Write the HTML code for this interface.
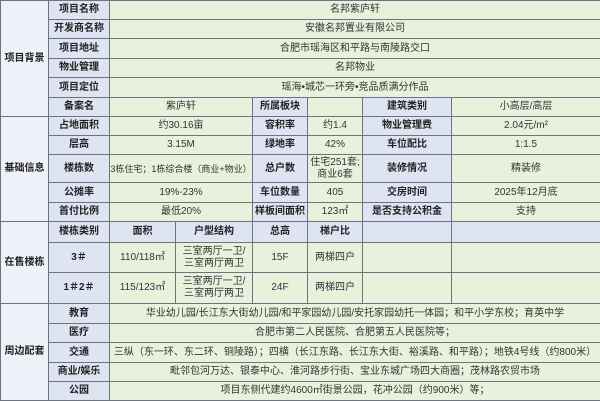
<!DOCTYPE html>
<html><head><meta charset="utf-8"><style>
body{margin:0;width:600px;height:400px;overflow:hidden;background:#fff}
table{border-collapse:collapse;table-layout:fixed;width:600px;font-family:"Liberation Sans","Noto Sans CJK SC",sans-serif;font-size:10px;color:#222}
td{border:1px solid #6a7482;text-align:center;padding:0;line-height:12px;overflow:hidden;white-space:nowrap}
.s{background:#eef1f8;font-weight:bold}
.b{background:#dfe4f3;font-weight:bold}
.g{background:#e8f1dc;color:#333}
</style></head><body>
<table>
<colgroup><col style="width:48px"><col style="width:61px"><col style="width:66px"><col style="width:77px"><col style="width:55px"><col style="width:55px"><col style="width:89px"><col style="width:149px"></colgroup>
<tr style="height:19px"><td class="s" rowspan="6">项目背景</td><td class="b">项目名称</td><td class="g" colspan="6">名邦紫庐轩</td></tr>
<tr style="height:19px"><td class="b">开发商名称</td><td class="g" colspan="6">安徽名邦置业有限公司</td></tr>
<tr style="height:20px"><td class="b">项目地址</td><td class="g" colspan="6">合肥市瑶海区和平路与南陵路交口</td></tr>
<tr style="height:19px"><td class="b">物业管理</td><td class="g" colspan="6">名邦物业</td></tr>
<tr style="height:20px"><td class="b">项目定位</td><td class="g" colspan="6">瑶海•城芯一环旁•竞品质满分作品</td></tr>
<tr style="height:19px"><td class="b">备案名</td><td class="g" colspan="2">紫庐轩</td><td class="b">所属板块</td><td class="g"></td><td class="b">建筑类别</td><td class="g">小高层/高层</td></tr>
<tr style="height:19px"><td class="s" rowspan="5">基础信息</td><td class="b">占地面积</td><td class="g" colspan="2">约30.16亩</td><td class="b">容积率</td><td class="g">约1.4</td><td class="b">物业管理费</td><td class="g">2.04元/m²</td></tr>
<tr style="height:19px"><td class="b">层高</td><td class="g" colspan="2">3.15M</td><td class="b">绿地率</td><td class="g">42%</td><td class="b">车位配比</td><td class="g">1:1.5</td></tr>
<tr style="height:28px"><td class="b">楼栋数</td><td class="g" colspan="2" style="font-size:9px">3栋住宅；1栋综合楼（商业+物业）</td><td class="b">总户数</td><td class="g">住宅251套;<br>商业6套</td><td class="b">装修情况</td><td class="g">精装修</td></tr>
<tr style="height:20px"><td class="b">公摊率</td><td class="g" colspan="2">19%-23%</td><td class="b">车位数量</td><td class="g">405</td><td class="b">交房时间</td><td class="g">2025年12月底</td></tr>
<tr style="height:19px"><td class="b">首付比例</td><td class="g" colspan="2">最低20%</td><td class="b">样板间面积</td><td class="g">123㎡</td><td class="b">是否支持公积金</td><td class="g">支持</td></tr>
<tr style="height:21px"><td class="s" rowspan="3">在售楼栋</td><td class="b">楼栋类别</td><td class="b">面积</td><td class="b">户型结构</td><td class="b">总高</td><td class="b">梯户比</td><td class="b"></td><td class="b"></td></tr>
<tr style="height:30px"><td class="b">3＃</td><td class="g">110/118㎡</td><td class="g">三室两厅一卫/<br>三室两厅两卫</td><td class="g">15F</td><td class="g">两梯四户</td><td class="g"></td><td class="g"></td></tr>
<tr style="height:31px"><td class="b">1＃2＃</td><td class="g">115/123㎡</td><td class="g">三室两厅一卫/<br>三室两厅两卫</td><td class="g">24F</td><td class="g">两梯四户</td><td class="g"></td><td class="g"></td></tr>
<tr style="height:20px"><td class="s" rowspan="5">周边配套</td><td class="b">教育</td><td class="g" colspan="6">华业幼儿园/长江东大街幼儿园/和平家园幼儿园/安托家园幼托一体园；和平小学东校；育英中学</td></tr>
<tr style="height:19px"><td class="b">医疗</td><td class="g" colspan="6">合肥市第二人民医院、合肥第五人民医院等；</td></tr>
<tr style="height:20px"><td class="b">交通</td><td class="g" colspan="6">三纵（东一环、东二环、铜陵路）；四横（长江东路、长江东大街、裕溪路、和平路）；地铁4号线（约800米）</td></tr>
<tr style="height:19px"><td class="b">商业/娱乐</td><td class="g" colspan="6">毗邻包河万达、银泰中心、淮河路步行街、宝业东城广场四大商圈；茂林路农贸市场</td></tr>
<tr style="height:19px"><td class="b">公园</td><td class="g" colspan="6">项目东侧代建约4600㎡街景公园，花冲公园（约900米）等；</td></tr>
</table>
</body></html>
